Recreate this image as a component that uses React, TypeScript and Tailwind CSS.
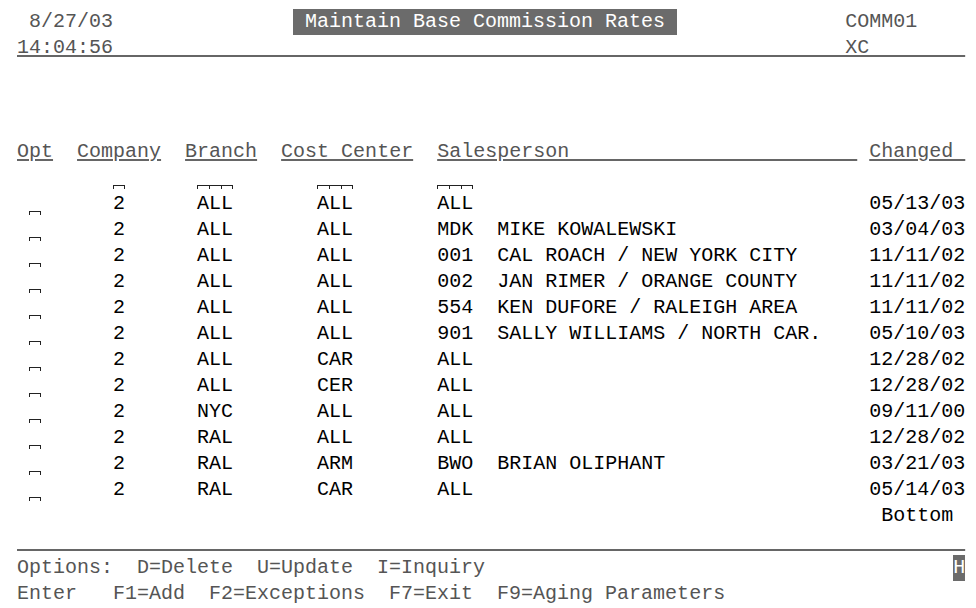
import React from "react";

// 5250 green-screen style display: 12px per column, 26px per row
type Seg = {
  c: number;
  t: string;
  k?: "text" | "field" | "title" | "cursor";
  ul?: boolean;
  dark?: boolean;
};

const rows: [string, string, string, string, string, string][] = [
  ["2", "ALL", "ALL", "ALL", "", "05/13/03"],
  ["2", "ALL", "ALL", "MDK", "MIKE KOWALEWSKI", "03/04/03"],
  ["2", "ALL", "ALL", "001", "CAL ROACH / NEW YORK CITY", "11/11/02"],
  ["2", "ALL", "ALL", "002", "JAN RIMER / ORANGE COUNTY", "11/11/02"],
  ["2", "ALL", "ALL", "554", "KEN DUFORE / RALEIGH AREA", "11/11/02"],
  ["2", "ALL", "ALL", "901", "SALLY WILLIAMS / NORTH CAR.", "05/10/03"],
  ["2", "ALL", "CAR", "ALL", "", "12/28/02"],
  ["2", "ALL", "CER", "ALL", "", "12/28/02"],
  ["2", "NYC", "ALL", "ALL", "", "09/11/00"],
  ["2", "RAL", "ALL", "ALL", "", "12/28/02"],
  ["2", "RAL", "ARM", "BWO", "BRIAN OLIPHANT", "03/21/03"],
  ["2", "RAL", "CAR", "ALL", "", "05/14/03"],
];

function FieldMark({ len }: { len: number }) {
  return (
    <span className="absolute left-0 top-[20px] flex">
      {Array.from({ length: len }).map((_, i) => (
        <span
          key={i}
          className={
            "h-[4px] w-[12px] border-l border-t border-[#222] " +
            (i === len - 1 ? "border-r" : "")
          }
        />
      ))}
    </span>
  );
}

function Line({ segs }: { segs: Seg[] }) {
  let col = 0;
  const out: React.ReactNode[] = [];
  segs.forEach((s, i) => {
    if (s.c > col) out.push(" ".repeat(s.c - col));
    const cls = s.dark ? "text-black" : "text-[#555]";
    if (s.k === "field") {
      out.push(
        <span key={i} className="relative inline-block text-black">
          {s.t}
          <FieldMark len={s.t.length} />
        </span>
      );
    } else if (s.k === "title" || s.k === "cursor") {
      out.push(
        <span key={i} className="inline-block h-[26px] bg-[#6b6b6b] text-white">
          {s.t}
        </span>
      );
    } else {
      out.push(
        <span
          key={i}
          className={
            cls +
            (s.ul
              ? " underline decoration-2 underline-offset-[2px] decoration-[#666]"
              : "")
          }
        >
          {s.t}
        </span>
      );
    }
    col = s.c + s.t.length;
  });
  return <div className="h-[26px] leading-[26px] whitespace-pre">{out}</div>;
}

export default function App() {
  const lines: Seg[][] = [
    [
      { c: 2, t: "8/27/03" },
      { c: 24, t: " Maintain Base Commission Rates ", k: "title" },
      { c: 70, t: "COMM01" },
    ],
    [{ c: 1, t: "14:04:56" + " ".repeat(61) + "XC" + " ".repeat(8), ul: true }],
    [],
    [],
    [],
    [
      { c: 1, t: "Opt", ul: true },
      { c: 6, t: "Company", ul: true },
      { c: 15, t: "Branch", ul: true },
      { c: 23, t: "Cost Center", ul: true },
      { c: 36, t: "Salesperson" + " ".repeat(24), ul: true },
      { c: 72, t: "Changed ", ul: true },
    ],
    [
      { c: 9, t: " ", k: "field" },
      { c: 16, t: "   ", k: "field" },
      { c: 26, t: "   ", k: "field" },
      { c: 36, t: "   ", k: "field" },
    ],
    ...rows.map((r) => [
      { c: 2, t: " ", k: "field" } as Seg,
      { c: 9, t: r[0], dark: true },
      { c: 16, t: r[1], dark: true },
      { c: 26, t: r[2], dark: true },
      { c: 36, t: r[3], dark: true },
      { c: 41, t: r[4], dark: true },
      { c: 72, t: r[5], dark: true },
    ]),
    [{ c: 73, t: "Bottom", dark: true }],
    [{ c: 1, t: " ".repeat(79), ul: true }],
    [
      { c: 1, t: "Options:  D=Delete  U=Update  I=Inquiry" },
      { c: 79, t: "H", k: "cursor" },
    ],
    [{ c: 1, t: "Enter   F1=Add  F2=Exceptions  F7=Exit  F9=Aging Parameters" }],
  ];

  return (
    <div className="h-[608px] w-[976px] overflow-hidden bg-white pl-[5px] pt-[9px] font-['Liberation_Mono',monospace] text-[20px]">
      {lines.map((segs, i) => (
        <Line key={i} segs={segs} />
      ))}
    </div>
  );
}
